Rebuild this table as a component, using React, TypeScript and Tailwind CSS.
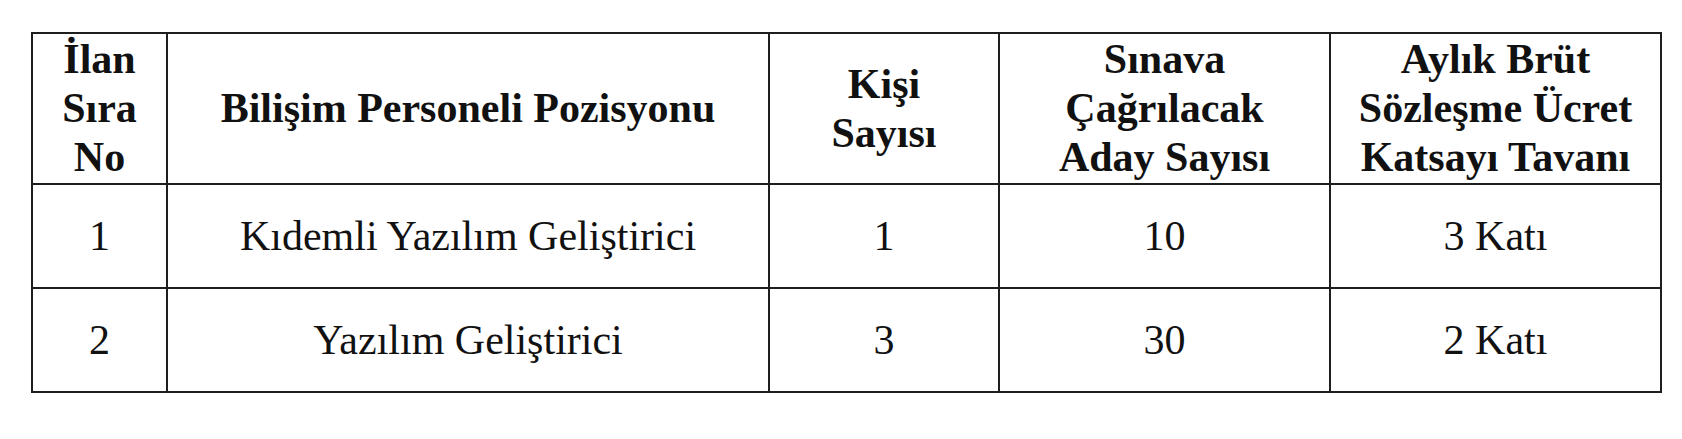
import React from "react";

type Row = {
    no: string;
    position: string;
    count: string;
    candidates: string;
    ratio: string;
};

const rows: Row[] = [
    { no: "1", position: "Kıdemli Yazılım Geliştirici", count: "1", candidates: "10", ratio: "3 Katı" },
    { no: "2", position: "Yazılım Geliştirici", count: "3", candidates: "30", ratio: "2 Katı" },
];

const headCell = "bg-white flex items-center justify-center text-center font-bold text-[42px] leading-[49px] text-[#111]";
const bodyCell = "bg-white flex items-center justify-center text-center text-[42px] leading-none text-[#111]";

const App: React.FC = () => {
    return (
        <div className="min-h-screen bg-white pt-[32px] pl-[31px]" style={{ fontFamily: '"Liberation Serif", "Times New Roman", serif' }}>
            <div className="inline-grid bg-[#1e1e1e] p-[2px] gap-[2px] grid-cols-[133px_600px_228px_329px_329px] grid-rows-[149px_102px_102px]">
                {/* header */}
                <div className={headCell}>
                    İlan<br />Sıra<br />No
                </div>
                <div className={headCell}>Bilişim Personeli Pozisyonu</div>
                <div className={headCell}>
                    Kişi<br />Sayısı
                </div>
                <div className={headCell}>
                    Sınava<br />Çağrılacak<br />Aday Sayısı
                </div>
                <div className={headCell}>
                    Aylık Brüt<br />Sözleşme Ücret<br />Katsayı Tavanı
                </div>

                {rows.map((r) => (
                    <React.Fragment key={r.no}>
                        <div className={bodyCell}>{r.no}</div>
                        <div className={bodyCell}>{r.position}</div>
                        <div className={bodyCell}>{r.count}</div>
                        <div className={bodyCell}>{r.candidates}</div>
                        <div className={bodyCell}>{r.ratio}</div>
                    </React.Fragment>
                ))}
            </div>
        </div>
    );
};

export default App;
